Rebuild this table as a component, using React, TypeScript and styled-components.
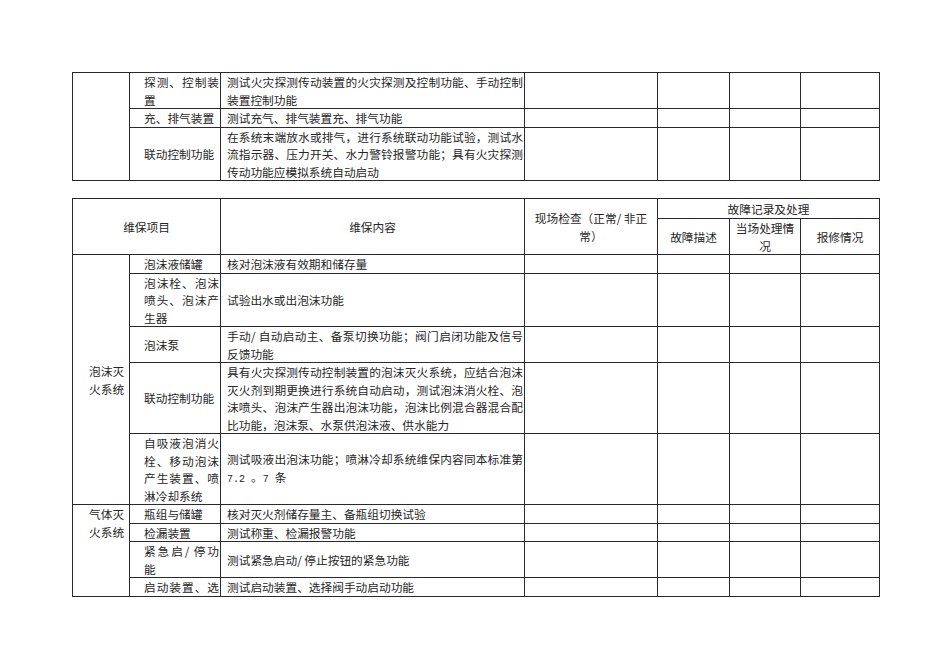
import styled, { createGlobalStyle } from 'styled-components';

const GlobalStyle = createGlobalStyle`
  html, body {
    margin: 0;
    background: #fff;
  }
  body {
    font-family: "Noto Sans CJK SC", "Noto Sans", sans-serif;
    color: #262626;
  }
`;

const Page = styled.div`
  display: flex;
  flex-direction: column;
  gap: 17px;
  padding: 72px 0 0 72px;
`;

const Sheet = styled.table`
  width: 807px;
  table-layout: fixed;
  border-collapse: collapse;
  font-size: 11.7px;
  line-height: 17.5px;
`;

type Kind = 'sys' | 'item' | 'text' | 'blank';

const pads: Record<Kind, string> = {
  sys: '0 1px 0 16px',
  item: '0 1px 0 14px',
  text: '0 1px 0 6px',
  blank: '0',
};

const Cell = styled.td<{ $kind: Kind; $top?: boolean }>`
  border: 1px solid #2a2a2a;
  padding: ${(p) => pads[p.$kind]};
  vertical-align: ${(p) => (p.$top ? 'top' : 'middle')};
  text-align: left;
  font-weight: normal;
`;

const HeadCell = styled.th<{ $height?: number }>`
  border: 1px solid #2a2a2a;
  padding: 0 4px;
  height: ${(p) => (p.$height ? `${p.$height}px` : 'auto')};
  vertical-align: middle;
  text-align: center;
  font-weight: normal;
`;

const Line = styled.span<{ $spread?: boolean }>`
  display: block;
  text-align: ${(p) => (p.$spread ? 'justify' : 'inherit')};
  text-align-last: ${(p) => (p.$spread ? 'justify' : 'auto')};
`;

// half-width figures as in the source document
const Mono = styled.span`
  font-family: "Liberation Mono", monospace;
  font-size: 10px;
`;

const widths = [57, 91, 304, 133, 72, 71, 79];

const Cols = () => (
  <colgroup>
    {widths.map((w, i) => (
      <col key={i} style={{ width: w }} />
    ))}
  </colgroup>
);

// lines except the last are stretched to the cell width, like the Word export
const Lines = ({
  lines,
  spreadLast,
  plain,
}: {
  lines: React.ReactNode[];
  spreadLast?: boolean;
  plain?: boolean;
}) => (
  <>
    {lines.map((l, i) => (
      <Line key={i} $spread={!plain && (i < lines.length - 1 || spreadLast)}>
        {l}
      </Line>
    ))}
  </>
);

type Row = {
  item: string[];
  content: React.ReactNode[];
  spreadItem?: boolean;
  system?: { lines: string[]; span: number; top?: boolean };
};

const firstRows: Row[] = [
  {
    item: ['探测、控制装', '置'],
    content: ['测试火灾探测传动装置的火灾探测及控制功能、手动控制', '装置控制功能'],
  },
  { item: ['充、排气装置'], content: ['测试充气、排气装置充、排气功能'] },
  {
    item: ['联动控制功能'],
    content: [
      '在系统末端放水或排气，进行系统联动功能试验，测试水',
      '流指示器、压力开关、水力警铃报警功能；具有火灾探测',
      '传动功能应模拟系统自动启动',
    ],
  },
];

const secondRows: Row[] = [
  {
    system: { lines: ['泡沫灭', '火系统'], span: 5 },
    item: ['泡沫液储罐'],
    content: ['核对泡沫液有效期和储存量'],
  },
  { item: ['泡沫栓、泡沫', '喷头、泡沫产', '生器'], content: ['试验出水或出泡沫功能'] },
  {
    item: ['泡沫泵'],
    content: ['手动/ 自动启动主、备泵切换功能；阀门启闭功能及信号', '反馈功能'],
  },
  {
    item: ['联动控制功能'],
    content: [
      '具有火灾探测传动控制装置的泡沫灭火系统，应结合泡沫',
      '灭火剂到期更换进行系统自动启动，测试泡沫消火栓、泡',
      '沫喷头、泡沫产生器出泡沫功能，泡沫比例混合器混合配',
      '比功能，泡沫泵、水泵供泡沫液、供水能力',
    ],
  },
  {
    item: ['自吸液泡消火', '栓、移动泡沫', '产生装置、喷', '淋冷却系统'],
    content: [
      '测试吸液出泡沫功能；喷淋冷却系统维保内容同本标准第',
      <>
        <Mono>7.2 </Mono>。<Mono>7 </Mono>条
      </>,
    ],
  },
  {
    system: { lines: ['气体灭', '火系统'], span: 4, top: true },
    item: ['瓶组与储罐'],
    content: ['核对灭火剂储存量主、备瓶组切换试验'],
  },
  { item: ['检漏装置'], content: ['测试称重、检漏报警功能'] },
  { item: ['紧急启/ 停功', '能'], content: ['测试紧急启动/ 停止按钮的紧急功能'] },
  { item: ['启动装置、选'], content: ['测试启动装置、选择阀手动启动功能'], spreadItem: true },
];

const BodyRow = ({ row, lead }: { row: Row; lead?: React.ReactNode }) => (
  <tr>
    {lead}
    {row.system && (
      <Cell $kind="sys" rowSpan={row.system.span} $top={row.system.top}>
        <Lines lines={row.system.lines} plain />
      </Cell>
    )}
    <Cell $kind="item">
      <Lines lines={row.item} spreadLast={row.spreadItem} />
    </Cell>
    <Cell $kind="text">
      <Lines lines={row.content} />
    </Cell>
    <Cell $kind="blank" />
    <Cell $kind="blank" />
    <Cell $kind="blank" />
    <Cell $kind="blank" />
  </tr>
);

export default function App() {
  return (
    <>
      <GlobalStyle />
      <Page>
        <Sheet>
          <Cols />
          <tbody>
            {firstRows.map((row, i) => (
              <BodyRow
                key={i}
                row={row}
                lead={i === 0 ? <Cell $kind="blank" rowSpan={firstRows.length} /> : null}
              />
            ))}
          </tbody>
        </Sheet>

        <Sheet>
          <Cols />
          <thead>
            <tr>
              <HeadCell colSpan={2} rowSpan={2}>
                维保项目
              </HeadCell>
              <HeadCell rowSpan={2}>维保内容</HeadCell>
              <HeadCell rowSpan={2}>
                <Line>现场检查（正常/ 非正</Line>
                <Line>常）</Line>
              </HeadCell>
              <HeadCell colSpan={3} $height={19}>
                故障记录及处理
              </HeadCell>
            </tr>
            <tr>
              <HeadCell>故障描述</HeadCell>
              <HeadCell>
                <Line>当场处理情</Line>
                <Line>况</Line>
              </HeadCell>
              <HeadCell>报修情况</HeadCell>
            </tr>
          </thead>
          <tbody>
            {secondRows.map((row, i) => (
              <BodyRow key={i} row={row} />
            ))}
          </tbody>
        </Sheet>
      </Page>
    </>
  );
}
